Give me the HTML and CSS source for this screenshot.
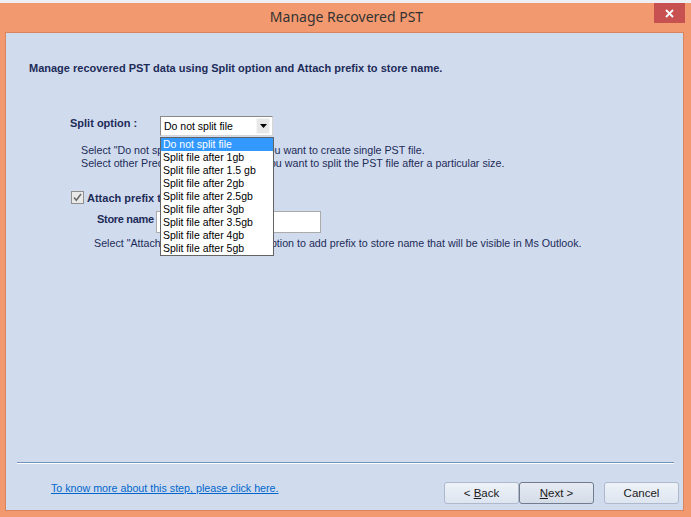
FILE: index.html
```html
<!DOCTYPE html>
<html lang="en">
<head>
  <meta charset="UTF-8" />
  <title>Manage Recovered PST</title>
  <link rel="stylesheet" href="styles.css">
</head>
<body>

  <div class="strip"></div>

  <div class="window">
    <!-- title bar -->
    <div class="titlebar">
      <span></span>
      <div class="title">Manage Recovered PST</div>
      <div class="close">
        <svg width="9" height="9" viewBox="0 0 9 9">
          <path d="M1 1 L8 8 M8 1 L1 8" stroke="#fff" stroke-width="1.8" fill="none"/>
        </svg>
      </div>
    </div>

    <div class="panel">
      <div class="heading">Manage recovered PST data using Split option and Attach prefix to store name.</div>

      <div class="split-row">
        <div class="label">Split option :</div>
        <div class="combo">
          <div class="combo-box">
            <span class="combo-text">Do not split file</span>
            <span class="combo-btn">
              <svg width="9" height="6" viewBox="0 0 9 6"><path d="M1 1 H8 L4.5 5 Z" fill="#000"/></svg>
            </span>
          </div>
          <ul class="combo-list">
            <li class="selected">Do not split file</li>
            <li>Split file after 1gb</li>
            <li>Split file after 1.5 gb</li>
            <li>Split file after 2gb</li>
            <li>Split file after 2.5gb</li>
            <li>Split file after 3gb</li>
            <li>Split file after 3.5gb</li>
            <li>Split file after 4gb</li>
            <li>Split file after 5gb</li>
          </ul>
        </div>
      </div>

      <div class="help split-help">
        Select "Do not split file" option in case you want to create single PST file.<br>
        Select other Predefined option in case you want to split the PST file after a particular size.
      </div>

      <div class="check-row">
        <span class="checkbox">
          <svg width="13" height="13" viewBox="0 0 13 13">
            <rect x="0.5" y="0.5" width="12" height="12" fill="#e9e9e9" stroke="#8f8f8f"/>
            <path d="M3 6.5 L5.3 9.2 L10 3" stroke="#6a6a6a" stroke-width="1.6" fill="none"/>
          </svg>
        </span>
        <span class="label">Attach prefix to store name</span>
      </div>

      <div class="store-row">
        <div class="label">Store name</div>
        <input type="text" class="store-input">
      </div>

      <div class="help prefix-help">
        Select "Attach prefix to store name" option to add prefix to store name that will be visible in Ms Outlook.
      </div>

      <div class="separator"></div>

      <div class="footer">
        <a href="#" class="more-link">To know more about this step, please click here.</a>
        <div class="buttons">
          <button class="btn">&lt; <u>B</u>ack</button>
          <button class="btn btn-default"><u>N</u>ext &gt;</button>
          <button class="btn btn-cancel">Cancel</button>
        </div>
      </div>
    </div>
  </div>

</body>
</html>
```

FILE: styles.css
```css
* {
  box-sizing: border-box;
}
html, body {
  margin: 0;
  padding: 0;
  width: 691px;
  height: 517px;
  overflow: hidden;
  font-family: 'Liberation Sans', Arial, sans-serif;
  font-size: 10.7px;
  color: #1d2b58;
}
body {
  display: flex;
  flex-direction: column;
}
.strip {
  height: 3px;
  background-color: #eef0f3;
}
.window {
  flex: 1;
  display: flex;
  flex-direction: column;
  background-color: #f2996f;
  padding: 0 7px 6px 5px;
}
.titlebar {
  height: 29px;
  display: grid;
  grid-template-columns: 1fr auto 1fr;
  align-items: start;
}
.title {
  font-family: 'Noto Sans', 'Open Sans', sans-serif;
  font-size: 14px;
  color: #333;
  line-height: 27px;
  padding-left: 4px;
}
.close {
  justify-self: end;
  margin-right: -1px;
  width: 31px;
  height: 20px;
  background-color: #c75050;
  display: flex;
  align-items: center;
  justify-content: center;
}
.panel {
  flex: 1;
  display: flex;
  flex-direction: column;
  background-color: #d0dcee;
  border: 1px solid #d8845e;
}
.heading {
  font-weight: bold;
  font-size: 11px;
  line-height: 14px;
  margin: 28px 0 0 23px;
}
.label {
  font-weight: bold;
  font-size: 11px;
  line-height: 14px;
  white-space: nowrap;
}
.split-row {
  display: flex;
  align-items: flex-start;
  margin: 41px 0 0 64px;
}
.split-row .label {
  width: 90px;
}
.combo {
  position: relative;
}
.combo-box {
  width: 113px;
  height: 20px;
  background: #fff;
  border: 1px solid #8a8a8a;
  border-right-color: #d6d6d6;
  border-bottom-color: #d6d6d6;
  display: flex;
  align-items: center;
  padding: 0 2px 0 3px;
}
.combo-text {
  flex: 1;
  color: #000;
  font-size: 10.5px;
}
.combo-btn {
  width: 14px;
  height: 16px;
  background-color: #e8e8e8;
  border: 1px solid #f6f6f6;
  display: flex;
  align-items: center;
  justify-content: center;
}
.combo-list {
  position: absolute;
  top: 21px;
  left: 0;
  width: 114px;
  margin: 0;
  padding: 0;
  list-style: none;
  background: #fff;
  border: 1px solid #646464;
  z-index: 2;
}
.combo-list li {
  height: 13px;
  line-height: 13px;
  padding-left: 2px;
  color: #000;
  font-size: 10.5px;
  white-space: nowrap;
}
.combo-list li.selected {
  background-color: #3399ff;
  color: #fff;
}
.help {
  line-height: 13px;
  white-space: nowrap;
}
.split-help {
  margin: 8px 0 0 75px;
}
.check-row {
  display: flex;
  align-items: center;
  gap: 3px;
  margin: 21px 0 0 65px;
  height: 13px;
}
.checkbox {
  display: flex;
}
.store-row {
  display: flex;
  align-items: flex-start;
  margin: 7px 0 0 91px;
}
.store-row .label {
  width: 59px;
  flex-shrink: 0;
  letter-spacing: -0.3px;
  padding-top: 1px;
}
.store-input {
  width: 165px;
  height: 22px;
  border: 1px solid #ababab;
  background: #fff;
  margin: 0;
}
.prefix-help {
  margin: 4px 0 0 88px;
}
.separator {
  margin: auto 9px 0 11px;
  height: 2px;
  border-top: 1px solid #7592b8;
  border-bottom: 1px solid #fff;
}
.footer {
  display: flex;
  align-items: flex-start;
  padding: 18px 4px 6px 45px;
}
.more-link {
  color: #0066cc;
  text-decoration: underline;
  line-height: 12px;
}
.buttons {
  display: flex;
  margin-left: auto;
}
.btn {
  width: 75px;
  height: 22px;
  font-family: 'Liberation Sans', Arial, sans-serif;
  font-size: 11.5px;
  color: #1a1a1a;
  background: linear-gradient(#eef2f8, #dde5f0);
  border: 1px solid #aebacc;
  border-radius: 3px;
  padding: 0;
}
.btn-default {
  border-color: #717d8e;
  background: linear-gradient(#e6ebf2, #d4dce8);
}
.btn-cancel {
  margin-left: 10px;
}
```
